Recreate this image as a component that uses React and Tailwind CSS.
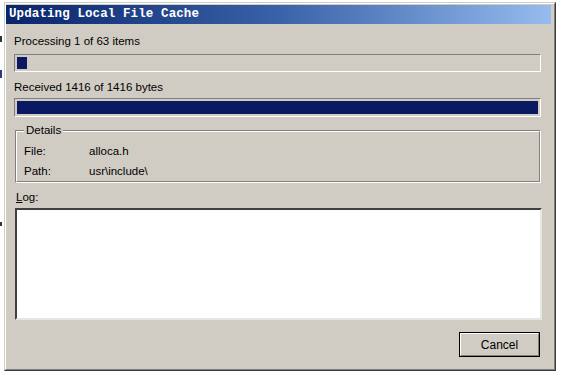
import React from 'react';

const sunken = 'border border-t-[#808080] border-l-[#808080] border-b-white border-r-white';

const ProgressBar = ({ percent, height }) => (
  <div className={`w-[527px] ${height} ${sunken} p-[2px] bg-[#d0ccc4]`}>
    <div className="h-full bg-[#0b1862]" style={{ width: `${percent}%` }} />
  </div>
);

const DetailRow = ({ label, value }) => (
  <div className="flex h-[20px] items-center">
    <span className="w-[65px]">{label}</span>
    <span>{value}</span>
  </div>
);

export default function App() {
  return (
    <div className="w-[562px] h-[376px] bg-white overflow-hidden relative" style={{ fontFamily: '"Liberation Sans", Arial, sans-serif' }}>
      {/* stray desktop bits on the left */}
      <div className="absolute left-0 top-[36px] w-[2px] h-[6px] bg-[#333]" />
      <div className="absolute left-0 top-[70px] w-[2px] h-[8px] bg-[#2a3a7a]" />
      <div className="absolute left-0 top-[222px] w-[2px] h-[4px] bg-[#333]" />

      <div className="ml-[4px] mt-[2px] w-[552px] h-[369px] bg-[#d0ccc4] border border-t-[#d0ccc4] border-l-[#d0ccc4] border-r-[#3a3a3a] border-b-[#3a3a3a]">
        <div className="h-full w-full border border-t-white border-l-white border-r-[#808080] border-b-[#808080] pr-[3px] flex flex-col">
          {/* title bar */}
          <div className="mt-[1px] h-[19px] bg-gradient-to-r from-[#0a246a] via-[#3a62a8] to-[#96bcee] flex items-center pl-[3px]">
            <span className="text-white font-bold text-[12.5px] tracking-[0.1px]" style={{ fontFamily: '"Liberation Mono", "DejaVu Sans Mono", monospace' }}>
              Updating Local File Cache
            </span>
          </div>

          <div className="pl-[8px] text-[11.5px] text-black">
            <div className="mt-[10px] h-[14px] leading-[14px]">Processing 1 of 63 items</div>
            <div className="mt-[6px]">
              <ProgressBar percent={2} height="h-[18px]" />
            </div>
            <div className="mt-[8px] h-[14px] leading-[14px]">Received 1416 of 1416 bytes</div>
            <div className="mt-[4px]">
              <ProgressBar percent={100} height="h-[19px]" />
            </div>

            {/* Details group */}
            <div className="relative mt-[13px] ml-[1px] w-[526px] h-[53px] border border-t-[#808080] border-l-[#808080] border-b-white border-r-white">
              <div className="absolute inset-0 border border-t-white border-l-white border-b-[#808080] border-r-[#808080]" />
              <span className="absolute left-[8px] top-[-8px] bg-[#d0ccc4] px-[2px] leading-[14px]">Details</span>
              <div className="relative pt-[11px] pl-[8px]">
                <DetailRow label="File:" value="alloca.h" />
                <DetailRow label="Path:" value="usr\include\" />
              </div>
            </div>

            <div className="mt-[7px] ml-[2px] h-[14px] leading-[14px]">
              <span className="underline">L</span>og:
            </div>
            <div className="mt-[4px] ml-[1px] w-[527px] h-[112px] bg-white border-2 border-t-[#404040] border-l-[#404040] border-b-[#e8e6e0] border-r-[#e8e6e0]" />

            <div className="mt-[12px] flex justify-end pr-[11px]">
              <button className="w-[81px] h-[25px] border border-black bg-[#d0ccc4] text-[12px]">
                <div className="h-full w-full border border-t-white border-l-white border-b-[#808080] border-r-[#808080] flex items-center justify-center">
                  Cancel
                </div>
              </button>
            </div>
          </div>
        </div>
      </div>
    </div>
  );
}
